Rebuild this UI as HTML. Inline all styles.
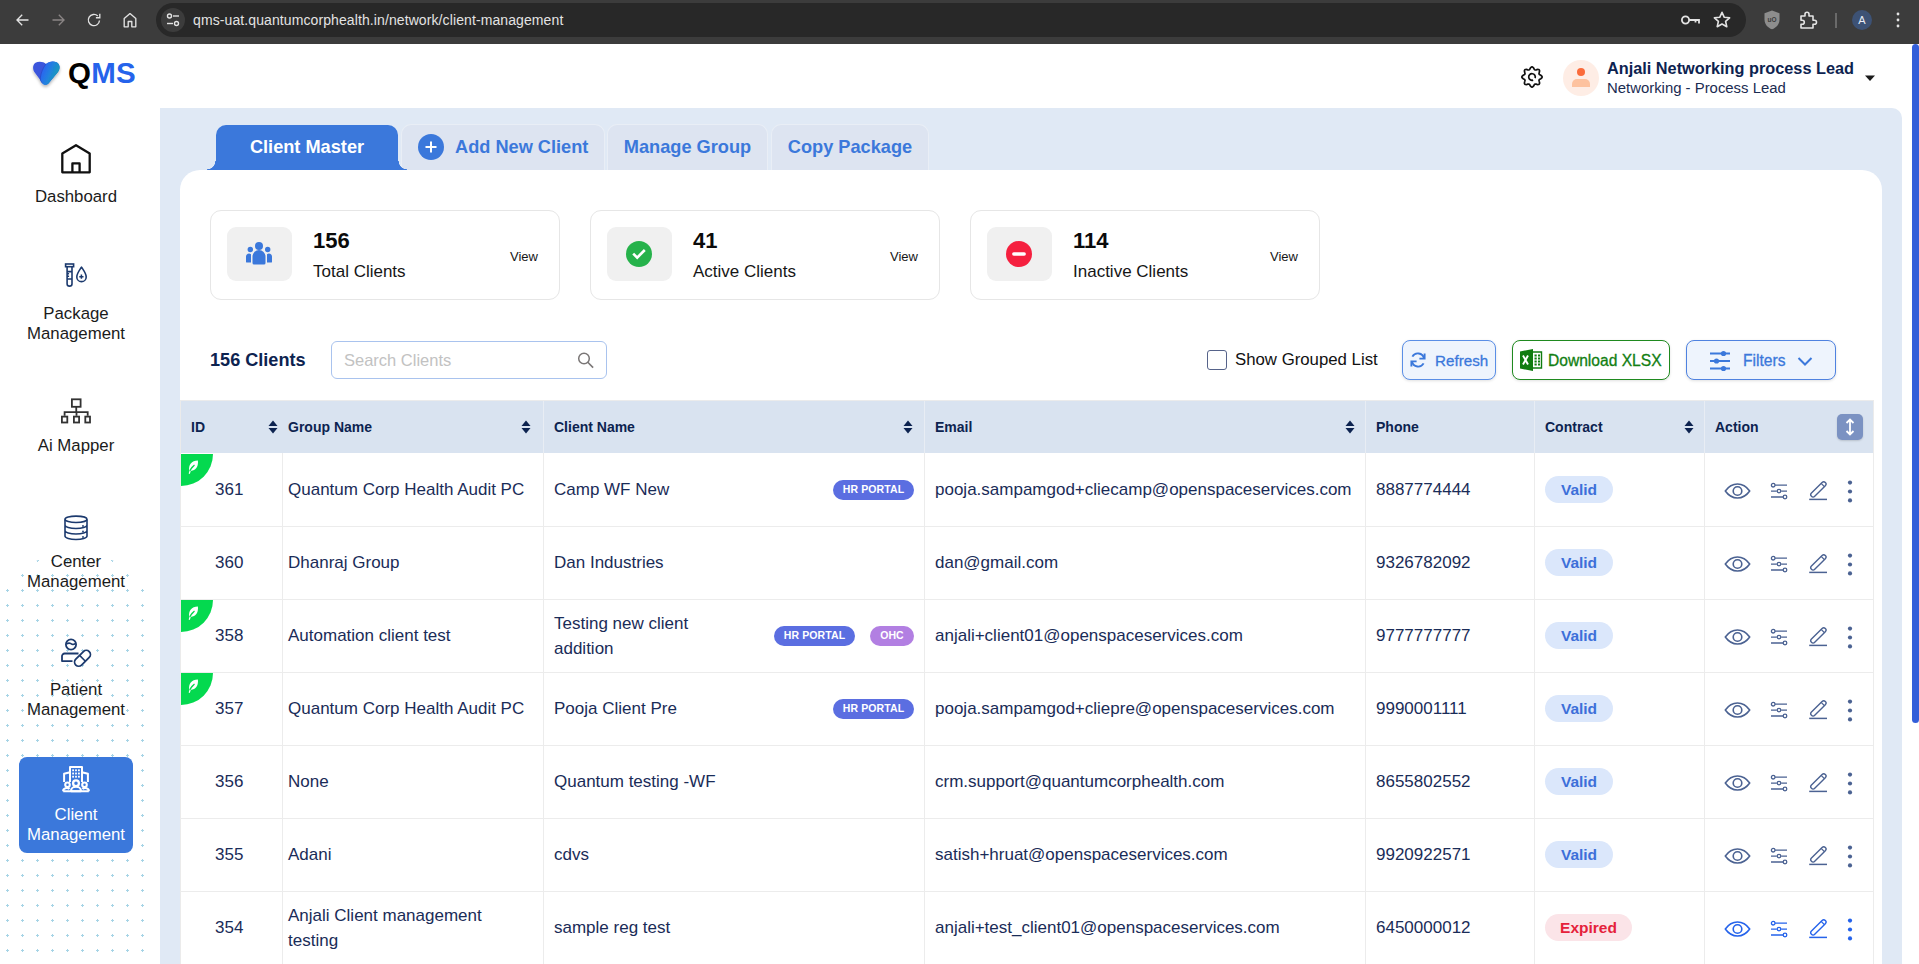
<!DOCTYPE html>
<html><head><meta charset="utf-8">
<style>
*{box-sizing:border-box;margin:0;padding:0}
html,body{width:1919px;height:964px;overflow:hidden;background:#fff;font-family:"Liberation Sans",sans-serif;position:relative}
.abs{position:absolute}
#chrome{position:absolute;left:0;top:0;width:1919px;height:44px;background:#3c3c3c}
#url{position:absolute;left:156px;top:3px;width:1590px;height:34px;border-radius:17px;background:#282828}
#urltxt{position:absolute;left:193px;top:12px;font-size:14px;color:#e3e3e3;letter-spacing:0.1px;white-space:nowrap}
#hdr{position:absolute;left:0;top:44px;width:1919px;height:64px;background:#fff}
#side{position:absolute;left:0;top:0;width:160px;height:964px}
#panel{position:absolute;left:160px;top:108px;width:1742px;height:900px;background:#e0e9f5;border-top-right-radius:10px}
#card{position:absolute;left:180px;top:170px;width:1702px;height:900px;background:#fff;border-radius:20px 20px 0 0}
#sb{position:absolute;left:1912px;top:44px;width:7px;height:679px;background:#335ed9;border-radius:4px}
.nav{position:absolute;left:0;width:152px;text-align:center;font-size:16.8px;color:#1b1b1b;line-height:20px}
.tab{position:absolute;top:124px;height:46px;border-radius:10px 10px 0 0;font-size:18.2px;font-weight:bold;color:#3b78db;text-align:center;line-height:44px;white-space:nowrap}
.stat{position:absolute;top:210px;width:350px;height:90px;border:1px solid #e6e6e6;border-radius:11px;background:#fff}
.stat .ib{position:absolute;left:16px;top:16px;width:65px;height:54px;border-radius:9px;background:#f0f0f0}
.stat .n{position:absolute;left:102px;top:17px;font-size:22px;font-weight:bold;color:#0b0b0b}
.stat .l{position:absolute;left:102px;top:51px;font-size:17px;color:#161616}
.stat .v{position:absolute;left:299px;top:38px;font-size:13px;color:#161616}
.th{position:absolute;top:417px;font-size:14px;font-weight:bold;color:#0d2350;white-space:nowrap;line-height:20px}
.td{position:absolute;height:73px;display:flex;align-items:center;font-size:17px;color:#1a2c58;white-space:nowrap;line-height:25px}
.badge{position:absolute;height:20px;border-radius:10px;color:#fff;font-size:10.5px;font-weight:bold;text-align:center;line-height:19px;letter-spacing:0.1px}
.pill{position:absolute;height:27px;border-radius:14px;font-size:15.5px;font-weight:bold;text-align:center;line-height:27px}
</style></head><body>
<div id="chrome">
  <svg class="abs" style="left:14px;top:11px" width="18" height="18" viewBox="0 0 18 18"><path d="M14.5 9H3.5M8.2 3.8L3 9l5.2 5.2" fill="none" stroke="#e3e3e3" stroke-width="1.35"/></svg>
  <svg class="abs" style="left:49px;top:11px" width="18" height="18" viewBox="0 0 18 18"><path d="M3.5 9h11M9.8 3.8L15 9l-5.2 5.2" fill="none" stroke="#8a8585" stroke-width="1.35"/></svg>
  <svg class="abs" style="left:85px;top:11px" width="18" height="18" viewBox="0 0 18 18"><path d="M14.5 9.5A5.6 5.6 0 1 1 12.8 5" fill="none" stroke="#e3e3e3" stroke-width="1.35"/><path d="M14.8 2.8v3.9h-3.9" fill="none" stroke="#e3e3e3" stroke-width="1.35"/></svg>
  <svg class="abs" style="left:121px;top:11px" width="18" height="18" viewBox="0 0 18 18"><path d="M3.2 15.8V7.6L9 2.6l5.8 5v8.2h-4v-5.3H7.2v5.3z" fill="none" stroke="#e3e3e3" stroke-width="1.35" stroke-linejoin="round"/></svg>
  <div id="url"></div>
  <div class="abs" style="left:161px;top:8px;width:24px;height:24px;border-radius:12px;background:#3c3c3c"></div>
  <svg class="abs" style="left:164px;top:11px" width="18" height="18" viewBox="0 0 18 18"><circle cx="5.5" cy="5" r="2" fill="none" stroke="#e3e3e3" stroke-width="1.4"/><path d="M9 5h6" stroke="#e3e3e3" stroke-width="1.4"/><circle cx="12.5" cy="12.5" r="2" fill="none" stroke="#e3e3e3" stroke-width="1.4"/><path d="M3 12.5h6" stroke="#e3e3e3" stroke-width="1.4"/></svg>
  <div id="urltxt">qms-uat.quantumcorphealth.in/network/client-management</div>
  <svg class="abs" style="left:1680px;top:12px" width="22" height="16" viewBox="0 0 22 16"><circle cx="5.5" cy="8" r="3.6" fill="none" stroke="#e3e3e3" stroke-width="1.8"/><path d="M9 8h10v3.5M15.5 8v2.5" fill="none" stroke="#e3e3e3" stroke-width="1.8"/></svg>
  <svg class="abs" style="left:1712px;top:10px" width="20" height="20" viewBox="0 0 20 20"><path d="M10 2.3l2.3 5 5.3.5-4 3.6 1.2 5.3L10 14l-4.8 2.7 1.2-5.3-4-3.6 5.3-.5z" fill="none" stroke="#e3e3e3" stroke-width="1.6" stroke-linejoin="round"/></svg>
  <svg class="abs" style="left:1762px;top:9px" width="20" height="22" viewBox="0 0 20 22"><path d="M10 1.5l7.5 2.8v6.2c0 4.8-3.3 8.3-7.5 9.8-4.2-1.5-7.5-5-7.5-9.8V4.3z" fill="#8d8d8d"/><text x="10" y="13" font-size="6.5" font-family="Liberation Sans" font-weight="bold" fill="#3c3c3c" text-anchor="middle">uO</text></svg>
  <svg class="abs" style="left:1798px;top:10px" width="20" height="20" viewBox="0 0 20 20"><path d="M3 6h4V4.2a2 2 0 0 1 4 0V6h4v4.2h1.5a2 2 0 0 1 0 4H15V18H3v-3.8h1.3a2 2 0 0 0 0-4H3z" fill="none" stroke="#e3e3e3" stroke-width="1.6" stroke-linejoin="round"/></svg>
  <div class="abs" style="left:1835px;top:13px;width:2px;height:15px;background:#6a6a6a"></div>
  <div class="abs" style="left:1852px;top:10px;width:20px;height:20px;border-radius:10px;background:#3d5275;color:#e8ecf5;font-size:11px;text-align:center;line-height:20px">A</div>
  <svg class="abs" style="left:1894px;top:11px" width="8" height="18" viewBox="0 0 8 18"><circle cx="4" cy="3" r="1.4" fill="#e3e3e3"/><circle cx="4" cy="9" r="1.4" fill="#e3e3e3"/><circle cx="4" cy="15" r="1.4" fill="#e3e3e3"/></svg>
</div>
<div id="hdr">
  <svg class="abs" style="left:30px;top:14px" width="34" height="34" viewBox="0 0 34 34">
    <defs><linearGradient id="hg" x1="0.1" y1="0.3" x2="0.9" y2="0.7"><stop offset="0" stop-color="#2c62f2"/><stop offset="0.45" stop-color="#2280e0"/><stop offset="1" stop-color="#17a0b2"/></linearGradient>
    <filter id="hs" x="-30%" y="-30%" width="160%" height="170%"><feDropShadow dx="0" dy="2" stdDeviation="1.4" flood-color="#000" flood-opacity="0.28"/></filter></defs>
    <g filter="url(#hs)">
    <path d="M16 6C13.5 3.5 8.5 3 5.5 4.8 2.8 6.5 2.6 10.5 4 13.5L12.5 25C14 27 16.5 27.5 18.5 25.5L28 14C30.5 10.5 30 6 26.5 4.3 23 2.8 18.5 3.8 16 6Z" fill="#3a55dc"/>
    <path d="M16 6C18.5 3.8 23 2.8 26.5 4.3 30 6 30.5 10.5 28 14L18.5 25.5C16.5 27.5 13.5 27 12.2 25.2L10.6 22.6C9.6 19 12 11 16 6Z" fill="url(#hg)"/>
    <path d="M16 6C12 11 9.6 19 10.6 22.6L12.2 25.2" fill="none" stroke="#2448c0" stroke-width="0.9" opacity="0.7"/>
    </g>
  </svg>
  <div class="abs" style="left:68px;top:13px;font-size:29.5px;font-weight:bold;letter-spacing:0.2px;color:#000;line-height:32px">Q<span style="color:#2563eb">MS</span></div>
  <svg class="abs" style="left:1520px;top:21px" width="24" height="24" viewBox="0 0 24 24"><path d="M12.00 1.85 L12.65 2.04 L13.24 2.56 L13.74 3.27 L14.14 4.01 L14.51 4.60 L14.93 4.93 L15.46 4.99 L16.14 4.83 L16.94 4.60 L17.80 4.44 L18.58 4.49 L19.18 4.82 L19.51 5.42 L19.56 6.20 L19.40 7.06 L19.17 7.86 L19.01 8.54 L19.07 9.07 L19.40 9.49 L19.99 9.86 L20.73 10.26 L21.44 10.76 L21.96 11.35 L22.15 12.00 L21.96 12.65 L21.44 13.24 L20.73 13.74 L19.99 14.14 L19.40 14.51 L19.07 14.93 L19.01 15.46 L19.17 16.14 L19.40 16.94 L19.56 17.80 L19.51 18.58 L19.18 19.18 L18.58 19.51 L17.80 19.56 L16.94 19.40 L16.14 19.17 L15.46 19.01 L14.93 19.07 L14.51 19.40 L14.14 19.99 L13.74 20.73 L13.24 21.44 L12.65 21.96 L12.00 22.15 L11.35 21.96 L10.76 21.44 L10.26 20.73 L9.86 19.99 L9.49 19.40 L9.07 19.07 L8.54 19.01 L7.86 19.17 L7.06 19.40 L6.20 19.56 L5.42 19.51 L4.82 19.18 L4.49 18.58 L4.44 17.80 L4.60 16.94 L4.83 16.14 L4.99 15.46 L4.93 14.93 L4.60 14.51 L4.01 14.14 L3.27 13.74 L2.56 13.24 L2.04 12.65 L1.85 12.00 L2.04 11.35 L2.56 10.76 L3.27 10.26 L4.01 9.86 L4.60 9.49 L4.93 9.07 L4.99 8.54 L4.83 7.86 L4.60 7.06 L4.44 6.20 L4.49 5.42 L4.82 4.82 L5.42 4.49 L6.20 4.44 L7.06 4.60 L7.86 4.83 L8.54 4.99 L9.07 4.93 L9.49 4.60 L9.86 4.01 L10.26 3.27 L10.76 2.56 L11.35 2.04Z" fill="none" stroke="#111" stroke-width="1.7" stroke-linejoin="round"/><path d="M13.13 15.10A3.3 3.3 0 1 1 15.10 13.13" fill="none" stroke="#111" stroke-width="1.7"/></svg>
  <div class="abs" style="left:1563px;top:16px;width:36px;height:36px;border-radius:18px;background:#feede5"></div>
  <div class="abs" style="left:1577px;top:24px;width:8px;height:8px;border-radius:4px;background:#fb6b3a"></div>
  <div class="abs" style="left:1572px;top:35px;width:18px;height:8px;border-radius:5px 5px 0 0;background:#fdc29f"></div>
  <div class="abs" style="left:1607px;top:14px;font-size:16.3px;font-weight:bold;color:#0d2350;white-space:nowrap;line-height:20px">Anjali Networking process Lead</div>
  <div class="abs" style="left:1607px;top:35px;font-size:14.9px;color:#1b2c52;white-space:nowrap;line-height:18px">Networking - Process Lead</div>
  <svg class="abs" style="left:1864px;top:30px" width="12" height="8" viewBox="0 0 12 8"><path d="M1 1.5h10L6 7z" fill="#1a1a1a"/></svg>
</div>
<div id="side">
  <svg class="abs" style="left:0;top:545px" width="150" height="419" viewBox="0 0 150 419"><defs><pattern id="dp" x="0" y="8" width="15" height="15" patternUnits="userSpaceOnUse"><rect x="6" y="7" width="3" height="1" fill="#a6d4e6"/><rect x="7" y="6" width="1" height="3" fill="#a6d4e6"/></pattern><clipPath id="dc"><circle cx="75" cy="101" r="93.5"/><rect x="0" y="101" width="150" height="318"/></clipPath></defs><rect x="0" y="0" width="150" height="419" fill="url(#dp)" clip-path="url(#dc)"/></svg>
  <svg class="abs" style="left:60px;top:143px" width="32" height="32" viewBox="0 0 32 32"><path d="M2.3 29.3V10.4L16 2.2l13.7 8.2v18.9z" fill="none" stroke="#111" stroke-width="2.3" stroke-linejoin="round"/><path d="M12.4 29.3v-8.9h7.2v8.9" fill="none" stroke="#111" stroke-width="2.3" stroke-linejoin="round"/></svg>
  <div class="nav" style="top:187px">Dashboard</div>
  <svg class="abs" style="left:63px;top:262px" width="26" height="26" viewBox="0 0 26 26"><rect x="2.6" y="2" width="8" height="2.7" fill="none" stroke="#1c3a6e" stroke-width="1.6"/><path d="M4.1 4.7v17a2.45 2.45 0 0 0 4.9 0v-17M4.1 9.6h4.9M4.1 17h4.9M4.1 11.8h2M4.1 14.3h2" fill="none" stroke="#1c3a6e" stroke-width="1.6"/><path d="M18.5 5.1C16 9 13.8 11.5 13.8 14.9a4.7 4.7 0 0 0 9.4 0C23.2 11.5 21 9 18.5 5.1z" fill="none" stroke="#1c3a6e" stroke-width="1.6" stroke-linejoin="round"/><path d="M18.4 12.6v4.2M16.3 14.7h4.2" stroke="#1c3a6e" stroke-width="1.5"/></svg>
  <div class="nav" style="top:304px">Package<br>Management</div>
  <svg class="abs" style="left:60px;top:397px" width="32" height="28" viewBox="0 0 32 28"><rect x="11.9" y="2.3" width="8.7" height="7.5" fill="none" stroke="#333" stroke-width="1.8"/><path d="M16.25 9.8v5.4M4.6 18.7v-3.5h23.1v3.5M16.5 15.2v3.5" fill="none" stroke="#333" stroke-width="1.8"/><rect x="1.9" y="19.6" width="5.4" height="5.9" fill="none" stroke="#333" stroke-width="1.8"/><rect x="13.9" y="19.6" width="5.2" height="5.9" fill="none" stroke="#333" stroke-width="1.8"/><rect x="25.3" y="19.6" width="4.7" height="5.9" fill="none" stroke="#333" stroke-width="1.8"/></svg>
  <div class="nav" style="top:436px">Ai Mapper</div>
  <svg class="abs" style="left:63px;top:515px" width="26" height="26" viewBox="0 0 26 26"><ellipse cx="13" cy="4.3" rx="11" ry="3.2" fill="none" stroke="#1c3a6e" stroke-width="1.6"/><path d="M2 4.5v16.5c0 2 5 3.5 11 3.5s11-1.5 11-3.5V4.5M2 10c0 2 5 3.5 11 3.5S24 12 24 10M2 15.5c0 2 5 3.5 11 3.5s11-1.5 11-3.5" fill="none" stroke="#1c3a6e" stroke-width="1.6"/><circle cx="20" cy="11" r="0.9" fill="#1c3a6e"/><circle cx="20" cy="16.5" r="0.9" fill="#1c3a6e"/><circle cx="20" cy="22" r="0.9" fill="#1c3a6e"/></svg>
  <div class="nav" style="top:552px">Center<br>Management</div>
  <svg class="abs" style="left:60px;top:637px" width="32" height="32" viewBox="0 0 32 32"><circle cx="11" cy="7.5" r="5.1" fill="none" stroke="#1c3a6e" stroke-width="1.8"/><path d="M6.3 7.2c1.6-1.2 3-1.6 4.6-.5s3 .9 4.6-.4" fill="none" stroke="#1c3a6e" stroke-width="1.6"/><path d="M18.5 16.5H4.6A2.6 2.6 0 0 0 2 19.1v5H12.5" fill="none" stroke="#1c3a6e" stroke-width="1.8" stroke-linejoin="round"/><g transform="rotate(-45 22.5 21.3)"><rect x="13" y="17.2" width="19" height="8.2" rx="4.1" fill="none" stroke="#1c3a6e" stroke-width="1.8"/><path d="M22.5 17.2v8.2" stroke="#1c3a6e" stroke-width="1.6"/></g></svg>
  <div class="nav" style="top:680px">Patient<br>Management</div>
  <div class="abs" style="left:19px;top:757px;width:114px;height:96px;border-radius:8px;background:#3b78db"></div>
  <svg class="abs" style="left:61px;top:764px" width="30" height="30" viewBox="0 0 30 30"><path d="M9 18V3h12v15M9 8.2L3.1 9.8V18M21 8.2l5.9 1.6V18" fill="none" stroke="#fff" stroke-width="2" stroke-linejoin="round"/><g fill="#fff"><rect x="11.2" y="5.4" width="1.8" height="1.8"/><rect x="14.1" y="5.4" width="1.8" height="1.8"/><rect x="17" y="5.4" width="1.8" height="1.8"/><rect x="11.2" y="8.6" width="1.8" height="1.8"/><rect x="14.1" y="8.6" width="1.8" height="1.8"/><rect x="17" y="8.6" width="1.8" height="1.8"/><rect x="11.2" y="11.8" width="1.8" height="1.8"/><rect x="14.1" y="11.8" width="1.8" height="1.8"/><rect x="17" y="11.8" width="1.8" height="1.8"/></g><rect x="8" y="18" width="14" height="11" fill="#3b78db"/><rect x="1" y="19" width="8" height="10" fill="#3b78db"/><rect x="21" y="19" width="8" height="10" fill="#3b78db"/><circle cx="15" cy="19.2" r="2.9" fill="none" stroke="#fff" stroke-width="2.3"/><circle cx="6.5" cy="20.8" r="2.3" fill="none" stroke="#fff" stroke-width="2.1"/><circle cx="23.5" cy="20.8" r="2.3" fill="none" stroke="#fff" stroke-width="2.1"/><path d="M10.2 27.3v-1.2a4.8 3.3 0 0 1 9.6 0v1.2z" fill="none" stroke="#fff" stroke-width="2.1" stroke-linejoin="round"/><path d="M2.2 27.3v-.8a3.5 2.6 0 0 1 6.3-1.4M27.8 27.3v-.8a3.5 2.6 0 0 0-6.3-1.4M2.2 27.3h25.6" fill="none" stroke="#fff" stroke-width="2.1" stroke-linejoin="round"/></svg>
  <div class="nav" style="top:805px;color:#fff">Client<br>Management</div>
</div>
<div id="panel"></div>
<div id="card"></div>
<!-- tabs -->
<div class="tab" style="left:401px;width:204px;background:#dde4f1;border:1px solid #e9eef6;border-bottom:none;text-align:left;padding-left:53px">Add New Client</div>
<div class="abs" style="left:418px;top:134px;width:26px;height:26px;border-radius:13px;background:#3b78db"></div>
<svg class="abs" style="left:418px;top:134px" width="26" height="26" viewBox="0 0 26 26"><path d="M13 7.5v11M7.5 13h11" stroke="#fff" stroke-width="2"/></svg>
<div class="tab" style="left:607px;width:161px;background:#dde4f1;border:1px solid #e9eef6;border-bottom:none">Manage Group</div>
<div class="tab" style="left:771px;width:158px;background:#dde4f1;border:1px solid #e9eef6;border-bottom:none">Copy Package</div>
<div class="abs" style="left:207px;top:161px;width:9px;height:9px;background:radial-gradient(circle at 0 0,transparent 8px,#3b78db 8.6px)"></div>
<div class="abs" style="left:398px;top:161px;width:9px;height:9px;background:radial-gradient(circle at 9px 0,transparent 8px,#3b78db 8.6px)"></div>
<div class="tab" style="left:216px;top:125px;width:182px;height:45px;background:#3b78db;color:#fff;line-height:45px">Client Master</div>
<!-- stats -->
<div class="stat" style="left:210px">
  <div class="ib"><svg class="abs" style="left:17px;top:12px" width="30" height="30" viewBox="0 0 30 30"><circle cx="15" cy="7" r="4" fill="#3b78db"/><circle cx="6.3" cy="10.5" r="2.7" fill="#3b78db"/><circle cx="23.7" cy="10.5" r="2.7" fill="#3b78db"/><path d="M8.5 24v-6.5a6.5 6.5 0 0 1 13 0V24a1.5 1.5 0 0 1-1.5 1.5h-10A1.5 1.5 0 0 1 8.5 24z" fill="#3b78db"/><path d="M2 22.5v-5a3 3 0 0 1 5-2.2v8.3H3a1 1 0 0 1-1-1.1zM28 22.5v-5a3 3 0 0 0-5-2.2v8.3h4a1 1 0 0 0 1-1.1z" fill="#3b78db"/></svg></div>
  <div class="n">156</div><div class="l">Total Clients</div><div class="v">View</div>
</div>
<div class="stat" style="left:590px">
  <div class="ib"><svg class="abs" style="left:19px;top:14px" width="26" height="26" viewBox="0 0 26 26"><circle cx="13" cy="13" r="13" fill="#26b24b"/><path d="M7.2 12.6l4 4 7.6-7.6" fill="none" stroke="#fff" stroke-width="2.6" stroke-linejoin="miter"/></svg></div>
  <div class="n">41</div><div class="l">Active Clients</div><div class="v">View</div>
</div>
<div class="stat" style="left:970px">
  <div class="ib"><svg class="abs" style="left:19px;top:14px" width="26" height="26" viewBox="0 0 26 26"><circle cx="13" cy="13" r="13" fill="#f5203f"/><path d="M7.8 13h10.4" stroke="#fff" stroke-width="3.4" stroke-linecap="round"/></svg></div>
  <div class="n">114</div><div class="l">Inactive Clients</div><div class="v">View</div>
</div>
<!-- toolbar -->
<div class="abs" style="left:210px;top:349px;font-size:18.1px;font-weight:bold;color:#0d2350;white-space:nowrap;line-height:22px">156 Clients</div>
<div class="abs" style="left:331px;top:341px;width:276px;height:38px;border:1px solid #a9c3ee;border-radius:6px;background:#fff"></div>
<div class="abs" style="left:344px;top:350px;font-size:16.5px;color:#c2c2c2;white-space:nowrap;line-height:20px">Search Clients</div>
<svg class="abs" style="left:576px;top:351px" width="19" height="19" viewBox="0 0 19 19"><circle cx="8" cy="7.5" r="5.3" fill="none" stroke="#7a7676" stroke-width="1.5"/><path d="M11.8 11.3l5.3 5.3" stroke="#7a7676" stroke-width="1.6"/></svg>
<div class="abs" style="left:1207px;top:350px;width:20px;height:20px;border:1.5px solid #56638a;border-radius:3px;background:#fff"></div>
<div class="abs" style="left:1235px;top:350px;font-size:16.8px;color:#111;white-space:nowrap;line-height:20px">Show Grouped List</div>
<div class="abs" style="left:1402px;top:340px;width:94px;height:40px;border:1.3px solid #5a8ee6;border-radius:8px;background:#eef4fd;box-shadow:0 1px 3px rgba(0,0,0,.12)"></div>
<svg class="abs" style="left:1408px;top:350px" width="20" height="20" viewBox="0 0 20 20"><path d="M16 8.2A6.3 6.3 0 0 0 4.4 6.6M4 11.8a6.3 6.3 0 0 0 11.6 1.6" fill="none" stroke="#3b78db" stroke-width="1.9"/><path d="M16.6 3.4v5.2h-5.2" fill="none" stroke="#3b78db" stroke-width="1.9"/><path d="M3.4 16.6v-5.2h5.2" fill="none" stroke="#3b78db" stroke-width="1.9"/></svg>
<div class="abs" style="left:1435px;top:351px;font-size:15.2px;color:#3b78db;-webkit-text-stroke:0.3px #3b78db;white-space:nowrap;line-height:20px">Refresh</div>
<div class="abs" style="left:1512px;top:340px;width:158px;height:40px;border:1.5px solid #1f8a1f;border-radius:8px;background:#fff;box-shadow:0 1px 3px rgba(0,0,0,.12)"></div>
<svg class="abs" style="left:1519px;top:348px" width="24" height="24" viewBox="0 0 24 24"><path d="M1 3.5L14 1v22L1 20.5z" fill="#107c10"/><path d="M14 4h8.5v16H14" fill="none" stroke="#107c10" stroke-width="1.4"/><path d="M15.5 7.5h2.2M19 7.5h2M15.5 10.5h2.2M19 10.5h2M15.5 13.5h2.2M19 13.5h2M15.5 16.5h2.2M19 16.5h2" stroke="#107c10" stroke-width="1.8"/><path d="M4 7.5l5 9M9 7.5l-5 9" stroke="#fff" stroke-width="1.9"/></svg>
<div class="abs" style="left:1548px;top:351px;font-size:15.6px;color:#138013;-webkit-text-stroke:0.3px #138013;white-space:nowrap;line-height:20px">Download XLSX</div>
<div class="abs" style="left:1686px;top:340px;width:150px;height:40px;border:1.3px solid #4f82e0;border-radius:8px;background:#eef4fd;box-shadow:0 1px 3px rgba(0,0,0,.12)"></div>
<svg class="abs" style="left:1709px;top:350px" width="22" height="22" viewBox="0 0 22 22"><path d="M1 3.5h20M1 11h20M1 18.5h20" stroke="#3b78db" stroke-width="1.8"/><circle cx="14.5" cy="3.5" r="2.6" fill="#3b78db"/><circle cx="7.5" cy="11" r="2.6" fill="#3b78db"/><circle cx="14.5" cy="18.5" r="2.6" fill="#3b78db"/></svg>
<div class="abs" style="left:1743px;top:351px;font-size:15.6px;color:#3b78db;-webkit-text-stroke:0.3px #3b78db;white-space:nowrap;line-height:20px">Filters</div>
<svg class="abs" style="left:1797px;top:355px" width="16" height="12" viewBox="0 0 16 12"><path d="M1.5 3l6.5 6.5L14.5 3" fill="none" stroke="#3b78db" stroke-width="2"/></svg>
<!-- table -->
<div class="abs" style="left:180px;top:400px;width:1694px;height:564px;border:1px solid #ebebeb;border-bottom:none"></div>
<div class="abs" style="left:181px;top:401px;width:1692px;height:52px;background:#d9e3f0"></div>
<div class="abs" style="left:543px;top:401px;width:1px;height:52px;background:#e8edf4"></div>
<div class="abs" style="left:924px;top:401px;width:1px;height:52px;background:#e8edf4"></div>
<div class="abs" style="left:1365px;top:401px;width:1px;height:52px;background:#e8edf4"></div>
<div class="abs" style="left:1534px;top:401px;width:1px;height:52px;background:#e8edf4"></div>
<div class="abs" style="left:1704px;top:401px;width:1px;height:52px;background:#e8edf4"></div>
<div class="th" style="left:191px">ID</div>
<div class="th" style="left:288px">Group Name</div>
<div class="th" style="left:554px">Client Name</div>
<div class="th" style="left:935px">Email</div>
<div class="th" style="left:1376px">Phone</div>
<div class="th" style="left:1545px">Contract</div>
<div class="th" style="left:1715px">Action</div>
<div class="abs" style="left:268px;top:420px;width:10px;height:14px"><svg width="10" height="14" viewBox="0 0 10 14"><path d="M5 0.5L9.5 6h-9z" fill="#0d2350"/><path d="M0.5 8h9L5 13.5z" fill="#0d2350"/></svg></div>
<div class="abs" style="left:521px;top:420px;width:10px;height:14px"><svg width="10" height="14" viewBox="0 0 10 14"><path d="M5 0.5L9.5 6h-9z" fill="#0d2350"/><path d="M0.5 8h9L5 13.5z" fill="#0d2350"/></svg></div>
<div class="abs" style="left:903px;top:420px;width:10px;height:14px"><svg width="10" height="14" viewBox="0 0 10 14"><path d="M5 0.5L9.5 6h-9z" fill="#0d2350"/><path d="M0.5 8h9L5 13.5z" fill="#0d2350"/></svg></div>
<div class="abs" style="left:1345px;top:420px;width:10px;height:14px"><svg width="10" height="14" viewBox="0 0 10 14"><path d="M5 0.5L9.5 6h-9z" fill="#0d2350"/><path d="M0.5 8h9L5 13.5z" fill="#0d2350"/></svg></div>
<div class="abs" style="left:1684px;top:420px;width:10px;height:14px"><svg width="10" height="14" viewBox="0 0 10 14"><path d="M5 0.5L9.5 6h-9z" fill="#0d2350"/><path d="M0.5 8h9L5 13.5z" fill="#0d2350"/></svg></div>
<div class="abs" style="left:1837px;top:414px;width:26px;height:26px;border-radius:5px;background:#7b92c2;box-shadow:0 1px 2px rgba(0,0,0,.15)"></div>
<svg class="abs" style="left:1837px;top:414px" width="26" height="26" viewBox="0 0 26 26"><path d="M13 5.5v15M9.5 9L13 5.5 16.5 9M9.5 17l3.5 3.5 3.5-3.5" fill="none" stroke="#fff" stroke-width="1.8"/></svg>
<div class="abs" style="left:180px;top:526px;width:1693px;height:1px;background:#ececec"></div>
<div class="abs" style="left:282px;top:453px;width:1px;height:73px;background:#ececec"></div>
<div class="abs" style="left:543px;top:453px;width:1px;height:73px;background:#ececec"></div>
<div class="abs" style="left:924px;top:453px;width:1px;height:73px;background:#ececec"></div>
<div class="abs" style="left:1365px;top:453px;width:1px;height:73px;background:#ececec"></div>
<div class="abs" style="left:1534px;top:453px;width:1px;height:73px;background:#ececec"></div>
<div class="abs" style="left:1704px;top:453px;width:1px;height:73px;background:#ececec"></div>
<div class="abs" style="left:1873px;top:453px;width:1px;height:73px;background:#ececec"></div>
<div class="abs" style="left:181px;top:454px;width:32px;height:32px;background:#04d94f;border-bottom-right-radius:32px"></div>
<svg class="abs" style="left:187px;top:460px" width="12" height="15" viewBox="0 0 12 15"><path d="M10.9 0.5C4.5 0.8 1.2 4.5 2.2 11 8 11.2 11.7 7.2 10.9 0.5z" fill="#fff"/><path d="M1.5 14c1-3.5 3-6.5 6-9" fill="none" stroke="#04d94f" stroke-width="1.2"/><path d="M2.2 13.8l1-3" stroke="#fff" stroke-width="1.2"/></svg>
<div class="td" style="left:215px;top:453px">361</div>
<div class="td" style="left:288px;top:453px">Quantum Corp Health Audit PC</div>
<div class="td" style="left:554px;top:453px">Camp WF New</div>
<div class="badge" style="left:833px;top:480px;width:81px;background:#5b6ee1">HR PORTAL</div>
<div class="td" style="left:935px;top:453px">pooja.sampamgod+cliecamp@openspaceservices.com</div>
<div class="td" style="left:1376px;top:453px">8887774444</div>
<div class="pill" style="left:1545px;top:476px;width:68px;background:#dbe7fb;color:#3d6fd9">Valid</div>
<svg class="abs" style="left:1723px;top:481px" width="29" height="20" viewBox="0 0 29 20"><path d="M2.3 10C5.5 5.5 9.5 3 14.5 3S23.5 5.5 26.7 10C23.5 14.5 19.5 17 14.5 17S5.5 14.5 2.3 10z" fill="none" stroke="#4b6292" stroke-width="1.6" stroke-linejoin="round"/><circle cx="14.5" cy="10" r="4.3" fill="none" stroke="#4b6292" stroke-width="1.6"/></svg>
<svg class="abs" style="left:1769px;top:480px" width="20" height="20" viewBox="0 0 20 20"><path d="M6 5.2h12M2 11.1h5.8M12.2 11.1H18M2 17h12.3" stroke="#4b6292" stroke-width="1.3"/><circle cx="4.2" cy="5.2" r="1.8" fill="#fff" stroke="#4b6292" stroke-width="1.3"/><circle cx="10" cy="11.1" r="1.8" fill="#fff" stroke="#4b6292" stroke-width="1.3"/><circle cx="16" cy="17" r="1.8" fill="#fff" stroke="#4b6292" stroke-width="1.3"/></svg>
<svg class="abs" style="left:1807px;top:480px" width="22" height="22" viewBox="0 0 22 22"><path d="M2.2 19.4h17.8" stroke="#4b6292" stroke-width="1.5"/><g transform="rotate(-45 11.4 9.4)"><rect x="1.6" y="7.1" width="19.6" height="4.6" rx="2.3" fill="none" stroke="#4b6292" stroke-width="1.4"/><path d="M17.6 7.1v4.6" stroke="#4b6292" stroke-width="1.3"/></g></svg>
<svg class="abs" style="left:1846px;top:480px" width="8" height="24" viewBox="0 0 8 24"><circle cx="4" cy="2.6" r="2.1" fill="#4b6292"/><circle cx="4" cy="11.5" r="2.1" fill="#4b6292"/><circle cx="4" cy="20.4" r="2.1" fill="#4b6292"/></svg>
<div class="abs" style="left:180px;top:599px;width:1693px;height:1px;background:#ececec"></div>
<div class="abs" style="left:282px;top:526px;width:1px;height:73px;background:#ececec"></div>
<div class="abs" style="left:543px;top:526px;width:1px;height:73px;background:#ececec"></div>
<div class="abs" style="left:924px;top:526px;width:1px;height:73px;background:#ececec"></div>
<div class="abs" style="left:1365px;top:526px;width:1px;height:73px;background:#ececec"></div>
<div class="abs" style="left:1534px;top:526px;width:1px;height:73px;background:#ececec"></div>
<div class="abs" style="left:1704px;top:526px;width:1px;height:73px;background:#ececec"></div>
<div class="abs" style="left:1873px;top:526px;width:1px;height:73px;background:#ececec"></div>
<div class="td" style="left:215px;top:526px">360</div>
<div class="td" style="left:288px;top:526px">Dhanraj Group</div>
<div class="td" style="left:554px;top:526px">Dan Industries</div>
<div class="td" style="left:935px;top:526px">dan@gmail.com</div>
<div class="td" style="left:1376px;top:526px">9326782092</div>
<div class="pill" style="left:1545px;top:549px;width:68px;background:#dbe7fb;color:#3d6fd9">Valid</div>
<svg class="abs" style="left:1723px;top:554px" width="29" height="20" viewBox="0 0 29 20"><path d="M2.3 10C5.5 5.5 9.5 3 14.5 3S23.5 5.5 26.7 10C23.5 14.5 19.5 17 14.5 17S5.5 14.5 2.3 10z" fill="none" stroke="#4b6292" stroke-width="1.6" stroke-linejoin="round"/><circle cx="14.5" cy="10" r="4.3" fill="none" stroke="#4b6292" stroke-width="1.6"/></svg>
<svg class="abs" style="left:1769px;top:553px" width="20" height="20" viewBox="0 0 20 20"><path d="M6 5.2h12M2 11.1h5.8M12.2 11.1H18M2 17h12.3" stroke="#4b6292" stroke-width="1.3"/><circle cx="4.2" cy="5.2" r="1.8" fill="#fff" stroke="#4b6292" stroke-width="1.3"/><circle cx="10" cy="11.1" r="1.8" fill="#fff" stroke="#4b6292" stroke-width="1.3"/><circle cx="16" cy="17" r="1.8" fill="#fff" stroke="#4b6292" stroke-width="1.3"/></svg>
<svg class="abs" style="left:1807px;top:553px" width="22" height="22" viewBox="0 0 22 22"><path d="M2.2 19.4h17.8" stroke="#4b6292" stroke-width="1.5"/><g transform="rotate(-45 11.4 9.4)"><rect x="1.6" y="7.1" width="19.6" height="4.6" rx="2.3" fill="none" stroke="#4b6292" stroke-width="1.4"/><path d="M17.6 7.1v4.6" stroke="#4b6292" stroke-width="1.3"/></g></svg>
<svg class="abs" style="left:1846px;top:553px" width="8" height="24" viewBox="0 0 8 24"><circle cx="4" cy="2.6" r="2.1" fill="#4b6292"/><circle cx="4" cy="11.5" r="2.1" fill="#4b6292"/><circle cx="4" cy="20.4" r="2.1" fill="#4b6292"/></svg>
<div class="abs" style="left:180px;top:672px;width:1693px;height:1px;background:#ececec"></div>
<div class="abs" style="left:282px;top:599px;width:1px;height:73px;background:#ececec"></div>
<div class="abs" style="left:543px;top:599px;width:1px;height:73px;background:#ececec"></div>
<div class="abs" style="left:924px;top:599px;width:1px;height:73px;background:#ececec"></div>
<div class="abs" style="left:1365px;top:599px;width:1px;height:73px;background:#ececec"></div>
<div class="abs" style="left:1534px;top:599px;width:1px;height:73px;background:#ececec"></div>
<div class="abs" style="left:1704px;top:599px;width:1px;height:73px;background:#ececec"></div>
<div class="abs" style="left:1873px;top:599px;width:1px;height:73px;background:#ececec"></div>
<div class="abs" style="left:181px;top:600px;width:32px;height:32px;background:#04d94f;border-bottom-right-radius:32px"></div>
<svg class="abs" style="left:187px;top:606px" width="12" height="15" viewBox="0 0 12 15"><path d="M10.9 0.5C4.5 0.8 1.2 4.5 2.2 11 8 11.2 11.7 7.2 10.9 0.5z" fill="#fff"/><path d="M1.5 14c1-3.5 3-6.5 6-9" fill="none" stroke="#04d94f" stroke-width="1.2"/><path d="M2.2 13.8l1-3" stroke="#fff" stroke-width="1.2"/></svg>
<div class="td" style="left:215px;top:599px">358</div>
<div class="td" style="left:288px;top:599px">Automation client test</div>
<div class="td two" style="left:554px;top:599px">Testing new client<br>addition</div>
<div class="badge" style="left:870px;top:626px;width:44px;background:#b27fe2">OHC</div>
<div class="badge" style="left:774px;top:626px;width:81px;background:#5b6ee1">HR PORTAL</div>
<div class="td" style="left:935px;top:599px">anjali+client01@openspaceservices.com</div>
<div class="td" style="left:1376px;top:599px">9777777777</div>
<div class="pill" style="left:1545px;top:622px;width:68px;background:#dbe7fb;color:#3d6fd9">Valid</div>
<svg class="abs" style="left:1723px;top:627px" width="29" height="20" viewBox="0 0 29 20"><path d="M2.3 10C5.5 5.5 9.5 3 14.5 3S23.5 5.5 26.7 10C23.5 14.5 19.5 17 14.5 17S5.5 14.5 2.3 10z" fill="none" stroke="#4b6292" stroke-width="1.6" stroke-linejoin="round"/><circle cx="14.5" cy="10" r="4.3" fill="none" stroke="#4b6292" stroke-width="1.6"/></svg>
<svg class="abs" style="left:1769px;top:626px" width="20" height="20" viewBox="0 0 20 20"><path d="M6 5.2h12M2 11.1h5.8M12.2 11.1H18M2 17h12.3" stroke="#4b6292" stroke-width="1.3"/><circle cx="4.2" cy="5.2" r="1.8" fill="#fff" stroke="#4b6292" stroke-width="1.3"/><circle cx="10" cy="11.1" r="1.8" fill="#fff" stroke="#4b6292" stroke-width="1.3"/><circle cx="16" cy="17" r="1.8" fill="#fff" stroke="#4b6292" stroke-width="1.3"/></svg>
<svg class="abs" style="left:1807px;top:626px" width="22" height="22" viewBox="0 0 22 22"><path d="M2.2 19.4h17.8" stroke="#4b6292" stroke-width="1.5"/><g transform="rotate(-45 11.4 9.4)"><rect x="1.6" y="7.1" width="19.6" height="4.6" rx="2.3" fill="none" stroke="#4b6292" stroke-width="1.4"/><path d="M17.6 7.1v4.6" stroke="#4b6292" stroke-width="1.3"/></g></svg>
<svg class="abs" style="left:1846px;top:626px" width="8" height="24" viewBox="0 0 8 24"><circle cx="4" cy="2.6" r="2.1" fill="#4b6292"/><circle cx="4" cy="11.5" r="2.1" fill="#4b6292"/><circle cx="4" cy="20.4" r="2.1" fill="#4b6292"/></svg>
<div class="abs" style="left:180px;top:745px;width:1693px;height:1px;background:#ececec"></div>
<div class="abs" style="left:282px;top:672px;width:1px;height:73px;background:#ececec"></div>
<div class="abs" style="left:543px;top:672px;width:1px;height:73px;background:#ececec"></div>
<div class="abs" style="left:924px;top:672px;width:1px;height:73px;background:#ececec"></div>
<div class="abs" style="left:1365px;top:672px;width:1px;height:73px;background:#ececec"></div>
<div class="abs" style="left:1534px;top:672px;width:1px;height:73px;background:#ececec"></div>
<div class="abs" style="left:1704px;top:672px;width:1px;height:73px;background:#ececec"></div>
<div class="abs" style="left:1873px;top:672px;width:1px;height:73px;background:#ececec"></div>
<div class="abs" style="left:181px;top:673px;width:32px;height:32px;background:#04d94f;border-bottom-right-radius:32px"></div>
<svg class="abs" style="left:187px;top:679px" width="12" height="15" viewBox="0 0 12 15"><path d="M10.9 0.5C4.5 0.8 1.2 4.5 2.2 11 8 11.2 11.7 7.2 10.9 0.5z" fill="#fff"/><path d="M1.5 14c1-3.5 3-6.5 6-9" fill="none" stroke="#04d94f" stroke-width="1.2"/><path d="M2.2 13.8l1-3" stroke="#fff" stroke-width="1.2"/></svg>
<div class="td" style="left:215px;top:672px">357</div>
<div class="td" style="left:288px;top:672px">Quantum Corp Health Audit PC</div>
<div class="td" style="left:554px;top:672px">Pooja Client Pre</div>
<div class="badge" style="left:833px;top:699px;width:81px;background:#5b6ee1">HR PORTAL</div>
<div class="td" style="left:935px;top:672px">pooja.sampamgod+cliepre@openspaceservices.com</div>
<div class="td" style="left:1376px;top:672px">9990001111</div>
<div class="pill" style="left:1545px;top:695px;width:68px;background:#dbe7fb;color:#3d6fd9">Valid</div>
<svg class="abs" style="left:1723px;top:700px" width="29" height="20" viewBox="0 0 29 20"><path d="M2.3 10C5.5 5.5 9.5 3 14.5 3S23.5 5.5 26.7 10C23.5 14.5 19.5 17 14.5 17S5.5 14.5 2.3 10z" fill="none" stroke="#4b6292" stroke-width="1.6" stroke-linejoin="round"/><circle cx="14.5" cy="10" r="4.3" fill="none" stroke="#4b6292" stroke-width="1.6"/></svg>
<svg class="abs" style="left:1769px;top:699px" width="20" height="20" viewBox="0 0 20 20"><path d="M6 5.2h12M2 11.1h5.8M12.2 11.1H18M2 17h12.3" stroke="#4b6292" stroke-width="1.3"/><circle cx="4.2" cy="5.2" r="1.8" fill="#fff" stroke="#4b6292" stroke-width="1.3"/><circle cx="10" cy="11.1" r="1.8" fill="#fff" stroke="#4b6292" stroke-width="1.3"/><circle cx="16" cy="17" r="1.8" fill="#fff" stroke="#4b6292" stroke-width="1.3"/></svg>
<svg class="abs" style="left:1807px;top:699px" width="22" height="22" viewBox="0 0 22 22"><path d="M2.2 19.4h17.8" stroke="#4b6292" stroke-width="1.5"/><g transform="rotate(-45 11.4 9.4)"><rect x="1.6" y="7.1" width="19.6" height="4.6" rx="2.3" fill="none" stroke="#4b6292" stroke-width="1.4"/><path d="M17.6 7.1v4.6" stroke="#4b6292" stroke-width="1.3"/></g></svg>
<svg class="abs" style="left:1846px;top:699px" width="8" height="24" viewBox="0 0 8 24"><circle cx="4" cy="2.6" r="2.1" fill="#4b6292"/><circle cx="4" cy="11.5" r="2.1" fill="#4b6292"/><circle cx="4" cy="20.4" r="2.1" fill="#4b6292"/></svg>
<div class="abs" style="left:180px;top:818px;width:1693px;height:1px;background:#ececec"></div>
<div class="abs" style="left:282px;top:745px;width:1px;height:73px;background:#ececec"></div>
<div class="abs" style="left:543px;top:745px;width:1px;height:73px;background:#ececec"></div>
<div class="abs" style="left:924px;top:745px;width:1px;height:73px;background:#ececec"></div>
<div class="abs" style="left:1365px;top:745px;width:1px;height:73px;background:#ececec"></div>
<div class="abs" style="left:1534px;top:745px;width:1px;height:73px;background:#ececec"></div>
<div class="abs" style="left:1704px;top:745px;width:1px;height:73px;background:#ececec"></div>
<div class="abs" style="left:1873px;top:745px;width:1px;height:73px;background:#ececec"></div>
<div class="td" style="left:215px;top:745px">356</div>
<div class="td" style="left:288px;top:745px">None</div>
<div class="td" style="left:554px;top:745px">Quantum testing -WF</div>
<div class="td" style="left:935px;top:745px">crm.support@quantumcorphealth.com</div>
<div class="td" style="left:1376px;top:745px">8655802552</div>
<div class="pill" style="left:1545px;top:768px;width:68px;background:#dbe7fb;color:#3d6fd9">Valid</div>
<svg class="abs" style="left:1723px;top:773px" width="29" height="20" viewBox="0 0 29 20"><path d="M2.3 10C5.5 5.5 9.5 3 14.5 3S23.5 5.5 26.7 10C23.5 14.5 19.5 17 14.5 17S5.5 14.5 2.3 10z" fill="none" stroke="#4b6292" stroke-width="1.6" stroke-linejoin="round"/><circle cx="14.5" cy="10" r="4.3" fill="none" stroke="#4b6292" stroke-width="1.6"/></svg>
<svg class="abs" style="left:1769px;top:772px" width="20" height="20" viewBox="0 0 20 20"><path d="M6 5.2h12M2 11.1h5.8M12.2 11.1H18M2 17h12.3" stroke="#4b6292" stroke-width="1.3"/><circle cx="4.2" cy="5.2" r="1.8" fill="#fff" stroke="#4b6292" stroke-width="1.3"/><circle cx="10" cy="11.1" r="1.8" fill="#fff" stroke="#4b6292" stroke-width="1.3"/><circle cx="16" cy="17" r="1.8" fill="#fff" stroke="#4b6292" stroke-width="1.3"/></svg>
<svg class="abs" style="left:1807px;top:772px" width="22" height="22" viewBox="0 0 22 22"><path d="M2.2 19.4h17.8" stroke="#4b6292" stroke-width="1.5"/><g transform="rotate(-45 11.4 9.4)"><rect x="1.6" y="7.1" width="19.6" height="4.6" rx="2.3" fill="none" stroke="#4b6292" stroke-width="1.4"/><path d="M17.6 7.1v4.6" stroke="#4b6292" stroke-width="1.3"/></g></svg>
<svg class="abs" style="left:1846px;top:772px" width="8" height="24" viewBox="0 0 8 24"><circle cx="4" cy="2.6" r="2.1" fill="#4b6292"/><circle cx="4" cy="11.5" r="2.1" fill="#4b6292"/><circle cx="4" cy="20.4" r="2.1" fill="#4b6292"/></svg>
<div class="abs" style="left:180px;top:891px;width:1693px;height:1px;background:#ececec"></div>
<div class="abs" style="left:282px;top:818px;width:1px;height:73px;background:#ececec"></div>
<div class="abs" style="left:543px;top:818px;width:1px;height:73px;background:#ececec"></div>
<div class="abs" style="left:924px;top:818px;width:1px;height:73px;background:#ececec"></div>
<div class="abs" style="left:1365px;top:818px;width:1px;height:73px;background:#ececec"></div>
<div class="abs" style="left:1534px;top:818px;width:1px;height:73px;background:#ececec"></div>
<div class="abs" style="left:1704px;top:818px;width:1px;height:73px;background:#ececec"></div>
<div class="abs" style="left:1873px;top:818px;width:1px;height:73px;background:#ececec"></div>
<div class="td" style="left:215px;top:818px">355</div>
<div class="td" style="left:288px;top:818px">Adani</div>
<div class="td" style="left:554px;top:818px">cdvs</div>
<div class="td" style="left:935px;top:818px">satish+hruat@openspaceservices.com</div>
<div class="td" style="left:1376px;top:818px">9920922571</div>
<div class="pill" style="left:1545px;top:841px;width:68px;background:#dbe7fb;color:#3d6fd9">Valid</div>
<svg class="abs" style="left:1723px;top:846px" width="29" height="20" viewBox="0 0 29 20"><path d="M2.3 10C5.5 5.5 9.5 3 14.5 3S23.5 5.5 26.7 10C23.5 14.5 19.5 17 14.5 17S5.5 14.5 2.3 10z" fill="none" stroke="#4b6292" stroke-width="1.6" stroke-linejoin="round"/><circle cx="14.5" cy="10" r="4.3" fill="none" stroke="#4b6292" stroke-width="1.6"/></svg>
<svg class="abs" style="left:1769px;top:845px" width="20" height="20" viewBox="0 0 20 20"><path d="M6 5.2h12M2 11.1h5.8M12.2 11.1H18M2 17h12.3" stroke="#4b6292" stroke-width="1.3"/><circle cx="4.2" cy="5.2" r="1.8" fill="#fff" stroke="#4b6292" stroke-width="1.3"/><circle cx="10" cy="11.1" r="1.8" fill="#fff" stroke="#4b6292" stroke-width="1.3"/><circle cx="16" cy="17" r="1.8" fill="#fff" stroke="#4b6292" stroke-width="1.3"/></svg>
<svg class="abs" style="left:1807px;top:845px" width="22" height="22" viewBox="0 0 22 22"><path d="M2.2 19.4h17.8" stroke="#4b6292" stroke-width="1.5"/><g transform="rotate(-45 11.4 9.4)"><rect x="1.6" y="7.1" width="19.6" height="4.6" rx="2.3" fill="none" stroke="#4b6292" stroke-width="1.4"/><path d="M17.6 7.1v4.6" stroke="#4b6292" stroke-width="1.3"/></g></svg>
<svg class="abs" style="left:1846px;top:845px" width="8" height="24" viewBox="0 0 8 24"><circle cx="4" cy="2.6" r="2.1" fill="#4b6292"/><circle cx="4" cy="11.5" r="2.1" fill="#4b6292"/><circle cx="4" cy="20.4" r="2.1" fill="#4b6292"/></svg>
<div class="abs" style="left:180px;top:964px;width:1693px;height:1px;background:#ececec"></div>
<div class="abs" style="left:282px;top:891px;width:1px;height:73px;background:#ececec"></div>
<div class="abs" style="left:543px;top:891px;width:1px;height:73px;background:#ececec"></div>
<div class="abs" style="left:924px;top:891px;width:1px;height:73px;background:#ececec"></div>
<div class="abs" style="left:1365px;top:891px;width:1px;height:73px;background:#ececec"></div>
<div class="abs" style="left:1534px;top:891px;width:1px;height:73px;background:#ececec"></div>
<div class="abs" style="left:1704px;top:891px;width:1px;height:73px;background:#ececec"></div>
<div class="abs" style="left:1873px;top:891px;width:1px;height:73px;background:#ececec"></div>
<div class="td" style="left:215px;top:891px">354</div>
<div class="td two" style="left:288px;top:891px">Anjali Client management<br>testing</div>
<div class="td" style="left:554px;top:891px">sample reg test</div>
<div class="td" style="left:935px;top:891px">anjali+test_client01@openspaceservices.com</div>
<div class="td" style="left:1376px;top:891px">6450000012</div>
<div class="pill" style="left:1545px;top:914px;width:87px;background:#fbe4e8;color:#e5213b">Expired</div>
<svg class="abs" style="left:1723px;top:919px" width="29" height="20" viewBox="0 0 29 20"><path d="M2.3 10C5.5 5.5 9.5 3 14.5 3S23.5 5.5 26.7 10C23.5 14.5 19.5 17 14.5 17S5.5 14.5 2.3 10z" fill="none" stroke="#2563eb" stroke-width="1.6" stroke-linejoin="round"/><circle cx="14.5" cy="10" r="4.3" fill="none" stroke="#2563eb" stroke-width="1.6"/></svg>
<svg class="abs" style="left:1769px;top:918px" width="20" height="20" viewBox="0 0 20 20"><path d="M6 5.2h12M2 11.1h5.8M12.2 11.1H18M2 17h12.3" stroke="#2563eb" stroke-width="1.3"/><circle cx="4.2" cy="5.2" r="1.8" fill="#fff" stroke="#2563eb" stroke-width="1.3"/><circle cx="10" cy="11.1" r="1.8" fill="#fff" stroke="#2563eb" stroke-width="1.3"/><circle cx="16" cy="17" r="1.8" fill="#fff" stroke="#2563eb" stroke-width="1.3"/></svg>
<svg class="abs" style="left:1807px;top:918px" width="22" height="22" viewBox="0 0 22 22"><path d="M2.2 19.4h17.8" stroke="#2563eb" stroke-width="1.5"/><g transform="rotate(-45 11.4 9.4)"><rect x="1.6" y="7.1" width="19.6" height="4.6" rx="2.3" fill="none" stroke="#2563eb" stroke-width="1.4"/><path d="M17.6 7.1v4.6" stroke="#2563eb" stroke-width="1.3"/></g></svg>
<svg class="abs" style="left:1846px;top:918px" width="8" height="24" viewBox="0 0 8 24"><circle cx="4" cy="2.6" r="2.1" fill="#2563eb"/><circle cx="4" cy="11.5" r="2.1" fill="#2563eb"/><circle cx="4" cy="20.4" r="2.1" fill="#2563eb"/></svg>
<!-- /table -->
<div id="sb"></div>
</body></html>
